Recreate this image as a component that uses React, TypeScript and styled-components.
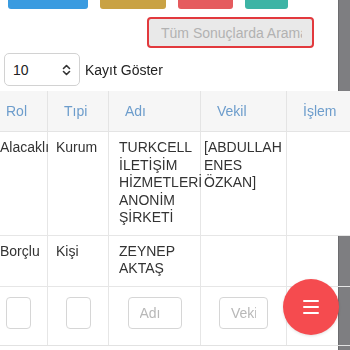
import styled, { createGlobalStyle } from "styled-components";

const GlobalStyle = createGlobalStyle`
  body {
    margin: 0;
    overflow: hidden;
    font-family: "Liberation Sans", Arial, sans-serif;
    font-size: 14px;
    color: #333;
  }
`;

interface Party {
  rol: string;
  tipi: string;
  adi: string;
  vekil: string;
  solid?: boolean;
}

const parties: Party[] = [
  {
    rol: "Alacaklı",
    tipi: "Kurum",
    adi: "TURKCELL İLETİŞİM HİZMETLERİ ANONİM ŞİRKETİ",
    vekil: "[ABDULLAH ENES ÖZKAN]",
    solid: true,
  },
  { rol: "Borçlu", tipi: "Kişi", adi: "ZEYNEP AKTAŞ", vekil: "" },
];

const headers = ["Rol", "Tıpi", "Adı", "Vekil", "İşlem"];
const widths = [56, 61, 92, 86, 80];

export default function App() {
  return (
    <>
      <GlobalStyle />
      <SideStripe />
      <Page>
        <ActionBar>
          <ActionButton $color="#3a9be0" $width={80} aria-label="Yeni" />
          <ActionButton $color="#c9a244" $width={66} aria-label="Düzenle" />
          <ActionButton $color="#e55b5e" $width={55} aria-label="Sil" />
          <ActionButton $color="#3db4a5" $width={43} aria-label="Yazdır" />
        </ActionBar>

        <SearchRow>
          <SearchInput placeholder="Tüm Sonuçlarda Arama" />
        </SearchRow>

        <LengthRow>
          <LengthSelect>
            <span>10</span>
            <svg width="9" height="12" viewBox="0 0 9 12" fill="none">
              <path d="M1.5 4.5 L4.5 1.5 L7.5 4.5" stroke="#333" strokeWidth="1.6" strokeLinecap="round" strokeLinejoin="round" />
              <path d="M1.5 7.5 L4.5 10.5 L7.5 7.5" stroke="#333" strokeWidth="1.6" strokeLinecap="round" strokeLinejoin="round" />
            </svg>
          </LengthSelect>
          <LengthLabel>Kayıt Göster</LengthLabel>
        </LengthRow>

        <Table>
          <colgroup>
            {widths.map((w, i) => (
              <col key={i} style={{ width: w }} />
            ))}
          </colgroup>
          <thead>
            <tr>
              {headers.map((h, i) => (
                <HeadCell key={h} $first={i === 0}>{h}</HeadCell>
              ))}
            </tr>
          </thead>
          <tbody>
            {parties.map((p) => (
              <BodyRow key={p.adi} $solid={p.solid}>
                <Cell $nowrap>{p.rol}</Cell>
                <Cell $nowrap>{p.tipi}</Cell>
                <Cell $padLeft={10}>{p.adi}</Cell>
                <Cell $padLeft={3}>{p.vekil}</Cell>
                <Cell />
              </BodyRow>
            ))}
            <tr>
              <FilterCell>
                <FilterInput $width={25} $shift={-2} />
              </FilterCell>
              <FilterCell>
                <FilterInput $width={25} />
              </FilterCell>
              <FilterCell>
                <FilterInput $width={54} placeholder="Adı" />
              </FilterCell>
              <FilterCell>
                <FilterInput $width={49} placeholder="Vekil" />
              </FilterCell>
              <FilterCell />
            </tr>
          </tbody>
        </Table>
      </Page>

      <Fab aria-label="Menü">
        <MenuLine />
        <MenuLine />
        <MenuLine />
      </Fab>
    </>
  );
}

const SideStripe = styled.div`
  position: fixed;
  top: 0;
  right: 0;
  width: 11px;
  height: 100vh;
  background: #7e7e81;
  border-left: 1px solid #6c6c6f;
`;

const Page = styled.div`
  position: relative;
  z-index: 1;
  display: flex;
  flex-direction: column;
`;

const ActionBar = styled.div`
  display: flex;
  gap: 12px;
  padding-left: 8px;
`;

const ActionButton = styled.button<{ $color: string; $width: number }>`
  width: ${(p) => p.$width}px;
  height: 9px;
  border: none;
  padding: 0;
  background: ${(p) => p.$color};
  border-radius: 0 0 3px 3px;
`;

const SearchRow = styled.div`
  display: flex;
  justify-content: flex-end;
  padding-right: 36px;
  margin-top: 8px;
`;

const SearchInput = styled.input`
  box-sizing: border-box;
  width: 167px;
  height: 31px;
  border: 2px solid #e2393d;
  border-radius: 4px;
  background: #e9e9e9;
  padding: 0 10px 0 12px;
  font-family: "Liberation Sans", Arial, sans-serif;
  font-size: 14px;
  outline: none;

  &::placeholder {
    color: #b2b2b2;
  }
`;

const LengthRow = styled.div`
  display: flex;
  align-items: center;
  gap: 5px;
  padding-left: 4px;
  margin-top: 5px;
`;

const LengthSelect = styled.div`
  box-sizing: border-box;
  width: 76px;
  height: 33px;
  display: flex;
  align-items: center;
  justify-content: space-between;
  padding: 0 8px;
  border: 1px solid #d2d2d2;
  border-radius: 5px;
  background: #fff;
  font-size: 14px;
  color: #222;
`;

const LengthLabel = styled.span`
  font-size: 14px;
  color: #222;
`;

const Table = styled.table`
  margin: 5px 0 0 -9px;
  width: 375px;
  table-layout: fixed;
  border-collapse: collapse;
  font-size: 14px;
`;

const HeadCell = styled.th<{ $first?: boolean }>`
  height: 40px;
  padding: 0 4px 0 ${(p) => (p.$first ? 14 : 16)}px;
  text-align: left;
  font-weight: normal;
  color: #6d9dcc;
  background: #f6f6f6;
  border: 1px solid #e4e4e4;
  border-top: none;
`;

const BodyRow = styled.tr<{ $solid?: boolean }>`
  background: ${(p) => (p.$solid ? "#fff" : "transparent")};
`;

const Cell = styled.td<{ $nowrap?: boolean; $padLeft?: number }>`
  vertical-align: top;
  padding: 7px 4px 8px ${(p) => p.$padLeft ?? 8}px;
  line-height: 17.5px;
  color: #333;
  border: 1px solid #e6e6e6;
  white-space: ${(p) => (p.$nowrap ? "nowrap" : "normal")};
`;

const FilterCell = styled.td`
  height: 48px;
  padding: 10px 0 0;
  vertical-align: top;
  text-align: center;
  border-left: 1px solid #e6e6e6;
  border-right: 1px solid #e6e6e6;
  border-top: 1px solid #4a4a4a;
  border-bottom: 1px solid #e2e2e2;
`;

const FilterInput = styled.input<{ $width: number; $shift?: number }>`
  box-sizing: border-box;
  width: ${(p) => p.$width}px;
  height: 32px;
  margin-left: ${(p) => p.$shift ?? 0}px;
  padding: 0 11px;
  border: 1px solid #d6d6d6;
  border-radius: 4px;
  background: #fff;
  font-family: "Liberation Sans", Arial, sans-serif;
  font-size: 14px;

  &::placeholder {
    color: #b8b8b8;
  }
`;

const Fab = styled.button`
  position: fixed;
  z-index: 2;
  right: 11px;
  bottom: 15px;
  width: 56px;
  height: 56px;
  border: none;
  border-radius: 50%;
  background: #f54b4f;
  display: flex;
  flex-direction: column;
  align-items: center;
  justify-content: center;
  gap: 4px;
  padding: 0;
  box-shadow: 0 1px 3px rgba(0, 0, 0, 0.12);
`;

const MenuLine = styled.span`
  display: block;
  width: 16px;
  height: 2px;
  border-radius: 1px;
  background: #fff;
`;
